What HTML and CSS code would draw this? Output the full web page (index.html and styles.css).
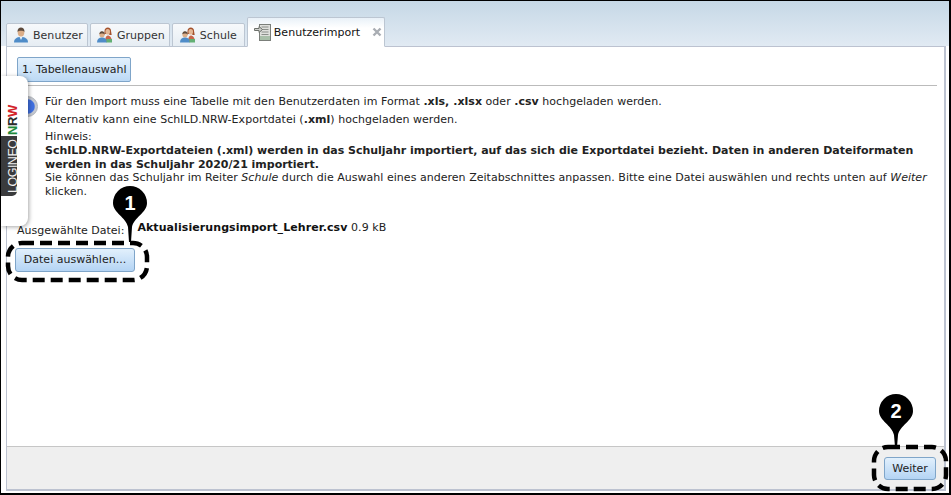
FILE: index.html
```html
<!DOCTYPE html>
<html lang="de">
<head>
    <meta charset="UTF-8">
    <title>Benutzerimport</title>
    <link rel="stylesheet" href="styles.css">
</head>
<body>
    <div class="window">
        <ul class="tabs">
            <li class="tab">
                <svg class="tab-icon" viewBox="0 0 16 16"><path d="M1 15.500c0-3.600 2.500-5.500 7-5.500s7 1.900 7 5.500z" fill="#4f8cc8"/><path d="M6.300 9.500h3.400L8 13z" fill="#e8f2fa"/><ellipse cx="8" cy="5.500" rx="3.300" ry="4" fill="#dcae88"/><path d="M4.500 5C4.300 1.800 6.200.5 8 .5s3.700 1.300 3.500 4.500C10.500 3.300 5.500 3.300 4.500 5z" fill="#5d4a3c"/></svg>
                Benutzer
            </li>
            <li class="tab">
                <svg class="tab-icon" viewBox="0 0 16 16"><path d="M7.500 4.500C7.500 1.500 9 .5 10.800.5s3.300 1 3.300 4l.6 3.500h-2.400v-1h-4l-1.300 1z" fill="#a4512c"/><ellipse cx="10.700" cy="4.800" rx="2.300" ry="2.800" fill="#e4b896"/><path d="M8 15c0-3.500 1-6.500 2.800-6.500s4.200 2 4.200 6.500z" fill="#c9664a"/><ellipse cx="5" cy="7.500" rx="2.600" ry="3" fill="#dcae88"/><path d="M2.400 7.300C2.300 5 3.600 4.200 5 4.200s2.700.8 2.600 3.100C6.800 6.300 3.200 6.300 2.400 7.300z" fill="#5d4a3c"/><path d="M0 15.500c0-3.300 2-5 5-5s5 1.700 5 5z" fill="#4f8cc8"/><rect x="9.500" y="12" width="5.500" height="3.500" fill="#63b074"/></svg>
                Gruppen
            </li>
            <li class="tab tab-school">
                <svg class="tab-icon" viewBox="0 0 16 16"><path d="M7.500 4.500C7.500 1.500 9 .5 10.800.5s3.300 1 3.300 4l.6 3.500h-2.400v-1h-4l-1.300 1z" fill="#a4512c"/><ellipse cx="10.700" cy="4.800" rx="2.300" ry="2.800" fill="#e4b896"/><path d="M8 15c0-3.500 1-6.500 2.800-6.500s4.200 2 4.200 6.500z" fill="#c9664a"/><ellipse cx="5" cy="7.500" rx="2.600" ry="3" fill="#dcae88"/><path d="M2.400 7.300C2.300 5 3.600 4.200 5 4.200s2.700.8 2.600 3.100C6.800 6.300 3.200 6.300 2.400 7.300z" fill="#5d4a3c"/><path d="M0 15.500c0-3.300 2-5 5-5s5 1.700 5 5z" fill="#4f8cc8"/><rect x="9.500" y="12" width="5.500" height="3.500" fill="#63b074"/></svg>
                Schule
            </li>
            <li class="tab active">
                <svg class="tab-icon tab-icon-import" viewBox="0 0 17 17"><rect x="5.500" y=".5" width="11" height="16" fill="#dfe0dc" stroke="#7b7f7a"/><path d="M7.500 3h7M7.500 5.500h7M7.500 8h7M7.500 10.500h7" stroke="#8b8f8a"/><rect x="6" y="12" width="10" height="4" fill="#a9bfa9"/><path d="M.5 4.500h4.500V2.500l3.500 3-3.500 3v-2H.5z" fill="#cfd1cd" stroke="#6c706b"/></svg>
                Benutzerimport
                <svg class="tab-close" viewBox="0 0 10 10"><path d="M1.500 1.500l7 7M8.500 1.500l-7 7" stroke="#a9adb3" stroke-width="2.400"/></svg>
            </li>
        </ul>

        <div class="panel">
            <div class="panel-body">
                <div class="steps">
                    <span class="step">1. Tabellenauswahl</span>
                </div>
                <div class="content">
                    <div class="info-dot"></div>
                    <div class="info">
                        <p class="line">Für den Import muss eine Tabelle mit den Benutzerdaten im Format <b>.xls, .xlsx</b> oder <b>.csv</b> hochgeladen werden.</p>
                        <p class="line">Alternativ kann eine SchILD.NRW-Exportdatei (<b>.xml</b>) hochgeladen werden.</p>
                        <p class="hint">Hinweis:<br>
                            <b>SchILD.NRW-Exportdateien (.xml) werden in das Schuljahr importiert, auf das sich die Exportdatei bezieht. Daten in anderen Dateiformaten werden in das Schuljahr 2020/21 importiert.</b><br>
                            Sie können das Schuljahr im Reiter <i>Schule</i> durch die Auswahl eines anderen Zeitabschnittes anpassen. Bitte eine Datei auswählen und rechts unten auf <i>Weiter</i> klicken.</p>
                    </div>
                </div>
                <div class="file-row">
                    <span class="file-label">Ausgewählte Datei:</span>
                    <span class="file-value"><b class="file-name">Aktualisierungsimport_Lehrer.csv</b> 0.9 kB</span>
                </div>
                <button class="btn btn-file">Datei auswählen...</button>
            </div>

            <div class="toolbar">
                <button class="btn btn-next">Weiter</button>
            </div>
        </div>
    </div>

    <div class="brand">
        <div class="brand-text">
            <span class="brand-logineo">LOGINEO</span>
            <span class="brand-nrw"><span class="n">N</span><span class="r">R</span><span class="w">W</span></span>
        </div>
    </div>

    <svg class="callouts" width="951" height="495" viewBox="0 0 951 495">
        <rect class="dash" x="8" y="243" width="139" height="37" rx="14"/>
        <path class="pin" d="M113 203a17 17 0 0 1 34 0c0 10-13 14-15 24l-1 15h-2l-1-15c-2-10-15-14-15-24z"/>
        <text class="pin-num" x="130" y="210">1</text>
        <rect class="dash" x="874" y="447" width="72" height="42" rx="14"/>
        <path class="pin" d="M879 411a17 17 0 0 1 34 0c0 10-13 14-15 24l-1 12h-2l-1-12c-2-10-15-14-15-24z"/>
        <text class="pin-num" x="896" y="418">2</text>
    </svg>
</body>
</html>
```

FILE: styles.css
```css
* {
    margin: 0;
    padding: 0;
    box-sizing: border-box;
    font-family: "DejaVu Sans", Verdana, sans-serif;
}
body {
    width: 951px;
    height: 495px;
    overflow: hidden;
    position: relative;
    background-color: #fff;
    font-size: 11px;
    color: #222;
}
.window {
    width: 951px;
    height: 495px;
    display: flex;
    flex-direction: column;
    border: 1px solid #000;
    border-right-width: 2px;
    border-bottom-width: 2px;
    padding: 16px 3px 2px 5px;
    background: linear-gradient(#c6d8e6, #e1eaf3) top / 100% 45px no-repeat;
}
.tabs {
    list-style: none;
    display: flex;
    align-items: flex-end;
    gap: 2px;
    height: 30px;
    margin-bottom: -1px;
    position: relative;
    z-index: 1;
}
.tab {
    display: flex;
    align-items: center;
    gap: 4px;
    height: 24px;
    padding: 0 4px 0 6px;
    font-size: 11px;
    letter-spacing: 0.03px;
    color: #333;
    background: linear-gradient(#f7f9fb, #e6edf3);
    border: 1px solid #bcc6d2;
    border-radius: 2px 2px 0 0;
}
.tab-school {
    padding: 0 7px 0 7px;
}
.tab.active {
    height: 30px;
    padding-right: 2px;
    color: #111;
    gap: 3px;
    background: linear-gradient(#e9f1f8, #fff 10px);
    border-bottom-color: #fff;
}
.tab-icon {
    width: 16px;
    height: 16px;
    flex: none;
}
.tab-icon-import {
    width: 17px;
    height: 17px;
}
.tab-close {
    width: 10px;
    height: 10px;
    margin-left: 9px;
}
.panel {
    flex: 1;
    min-height: 0;
    display: flex;
    flex-direction: column;
    background-color: #fff;
    border: 1px solid #bcc2d0;
    border-width: 1px 2px 2px 1px;
}
.panel-body {
    flex: 1;
    padding: 10px 7px 0 10px;
}
.steps {
    height: 29px;
    margin-left: 2px;
    border-bottom: 1px solid #bbb;
}
.step {
    display: inline-block;
    height: 25px;
    line-height: 23px;
    padding: 0 4px;
    margin-left: -2px;
    font-size: 11px;
    color: #222;
    background: linear-gradient(#e2f0fc, #bcd9f5);
    border: 1px solid #7fa5c9;
    border-radius: 2px;
}
.content {
    display: flex;
    gap: 7px;
    margin-top: 9px;
}
.info-dot {
    flex: none;
    width: 21px;
    height: 21px;
    margin-top: 1px;
    border-radius: 50%;
    background: radial-gradient(closest-side, #3f6fe0 70%, #c4c8d0 82%);
    border: 1px solid #b0b4bc;
}
.info {
    letter-spacing: 0.03px;
}
.line {
    line-height: 14px;
    margin-bottom: 4px;
}
.hint {
    line-height: 13.750px;
    margin-top: -1px;
}
.hint b {
    letter-spacing: -0.015px;
}
.file-row {
    display: flex;
    gap: 13px;
    margin-top: 22px;
    line-height: 14px;
}
.file-label {
    margin-top: 3px;
}
.file-value {
    letter-spacing: 0.08px;
}
.file-name {
    color: #111;
}
.btn {
    font-size: 11px;
    color: #222;
    background: linear-gradient(#e2f0fc, #b4d4f4);
    border: 1px solid #7fa5c9;
    border-radius: 3px;
}
.btn-file {
    display: block;
    width: 120px;
    height: 24px;
    margin-top: 10px;
    margin-left: -2px;
}
.toolbar {
    display: flex;
    justify-content: flex-end;
    align-items: center;
    height: 43px;
    padding-right: 8px;
    background-color: #efefef;
    border-top: 1px solid #c6c6c6;
}
.btn-next {
    width: 52px;
    height: 23px;
}
.brand {
    position: absolute;
    left: 1px;
    top: 76px;
    width: 27px;
    height: 150px;
    background-color: #fff;
    border-radius: 0 8px 8px 0;
    box-shadow: 1px 1px 4px rgba(0, 0, 0, 0.35);
}
.brand-text {
    position: absolute;
    left: 0;
    top: 29px;
    height: 91px;
    writing-mode: vertical-rl;
    transform: rotate(180deg);
    display: flex;
    align-items: flex-start;
}
.brand-logineo {
    display: block;
    inline-size: 61px;
    block-size: 16px;
    line-height: 12px;
    padding-block-start: 6px;
    text-align: center;
    font-family: "Liberation Sans", Arial, sans-serif;
    font-size: 12.500px;
    letter-spacing: -0.5px;
    color: #f2f2f2;
    background-color: #3a3b3d;
    border-top-left-radius: 5px;
}
.brand-nrw {
    display: block;
    block-size: 16px;
    line-height: 12px;
    padding-block-start: 6px;
    margin-inline-start: 1px;
    font-size: 13px;
    letter-spacing: -0.4px;
    font-weight: bold;
}
.n, .r, .w {
    font-family: "Liberation Sans", Arial, sans-serif;
}
.n { color: #1f8a3c; }
.r { color: #2b2b2b; }
.w { color: #d2232a; }
.callouts {
    position: absolute;
    left: 0;
    top: 0;
    pointer-events: none;
}
.dash {
    fill: none;
    stroke: #000;
    stroke-width: 4.500;
    stroke-dasharray: 12 6;
}
.pin {
    fill: #000;
}
.pin-num {
    fill: #fff;
    font-size: 20px;
    font-weight: bold;
    text-anchor: middle;
    font-family: "Liberation Sans", Arial, sans-serif;
}
```
